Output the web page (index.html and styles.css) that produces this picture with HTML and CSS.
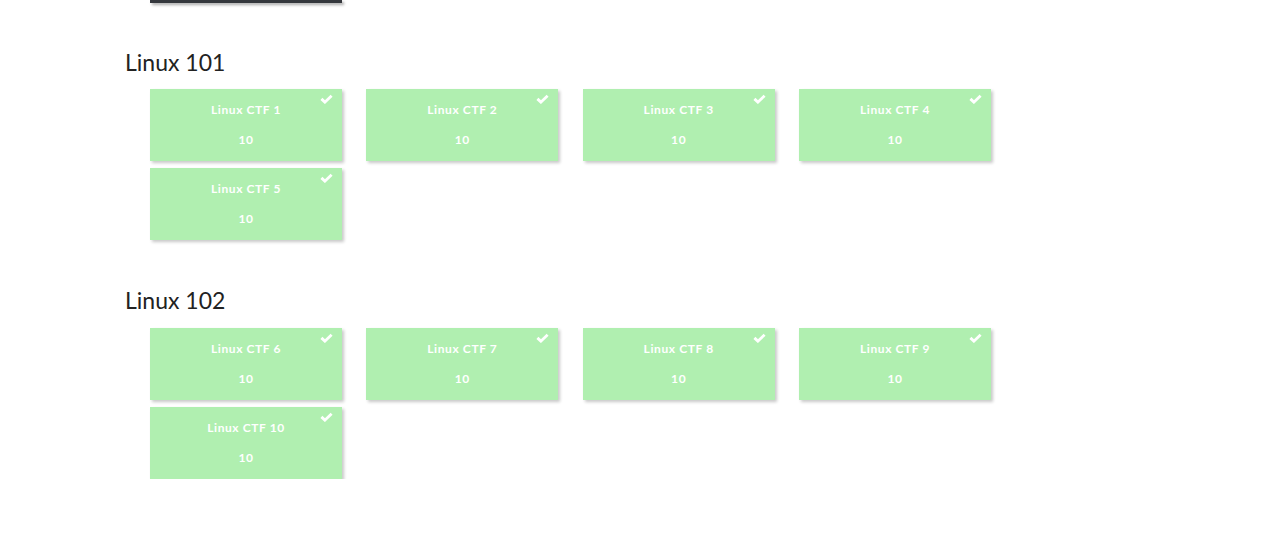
FILE: index.html
```html
<!DOCTYPE html>
<html>
<head>
<meta charset="utf-8">
<link rel="stylesheet" href="styles.css">
</head>
<body>
<div class="page">
  <div class="prev-card"></div>

  <section class="category">
    <h3 class="category-title">Linux 101</h3>
    <div class="grid">
      <div class="card"><svg class="check" viewBox="0 0 12 9"><polyline points="1.3,4.4 4.5,7.4 10.7,1.4"/></svg><p class="name">Linux CTF 1</p><p class="value">10</p></div>
      <div class="card"><svg class="check" viewBox="0 0 12 9"><polyline points="1.3,4.4 4.5,7.4 10.7,1.4"/></svg><p class="name">Linux CTF 2</p><p class="value">10</p></div>
      <div class="card"><svg class="check" viewBox="0 0 12 9"><polyline points="1.3,4.4 4.5,7.4 10.7,1.4"/></svg><p class="name">Linux CTF 3</p><p class="value">10</p></div>
      <div class="card"><svg class="check" viewBox="0 0 12 9"><polyline points="1.3,4.4 4.5,7.4 10.7,1.4"/></svg><p class="name">Linux CTF 4</p><p class="value">10</p></div>
      <div class="card"><svg class="check" viewBox="0 0 12 9"><polyline points="1.3,4.4 4.5,7.4 10.7,1.4"/></svg><p class="name">Linux CTF 5</p><p class="value">10</p></div>
    </div>
  </section>

  <section class="category">
    <h3 class="category-title">Linux 102</h3>
    <div class="grid">
      <div class="card"><svg class="check" viewBox="0 0 12 9"><polyline points="1.3,4.4 4.5,7.4 10.7,1.4"/></svg><p class="name">Linux CTF 6</p><p class="value">10</p></div>
      <div class="card"><svg class="check" viewBox="0 0 12 9"><polyline points="1.3,4.4 4.5,7.4 10.7,1.4"/></svg><p class="name">Linux CTF 7</p><p class="value">10</p></div>
      <div class="card"><svg class="check" viewBox="0 0 12 9"><polyline points="1.3,4.4 4.5,7.4 10.7,1.4"/></svg><p class="name">Linux CTF 8</p><p class="value">10</p></div>
      <div class="card"><svg class="check" viewBox="0 0 12 9"><polyline points="1.3,4.4 4.5,7.4 10.7,1.4"/></svg><p class="name">Linux CTF 9</p><p class="value">10</p></div>
      <div class="card"><svg class="check" viewBox="0 0 12 9"><polyline points="1.3,4.4 4.5,7.4 10.7,1.4"/></svg><p class="name">Linux CTF 10</p><p class="value">10</p></div>
    </div>
  </section>
</div>
</body>
</html>
```
FILE: styles.css
```css
html, body {
  margin: 0;
  padding: 0;
  background: #fff;
}
body {
  font-family: Lato, "Open Sans", "Liberation Sans", sans-serif;
  color: #222;
}
.page {
  padding-left: 125px;
}
.prev-card {
  margin-left: 25px;
  width: 192px;
  height: 3px;
  background: #35383d;
  box-shadow: 2px 2px 3px rgba(0, 0, 0, 0.35);
}
.category {
  padding-top: 46px;
}
.category + .category {
  padding-top: 47px;
}
.category + .category .grid {
  margin-top: 15px;
}
.category-title {
  margin: 0;
  font-size: 23px;
  font-weight: 400;
  line-height: 26px;
  color: #222;
}
.grid {
  margin-top: 14px;
  margin-left: 25px;
  display: grid;
  grid-template-columns: repeat(4, 192px);
  column-gap: 24.33px;
  row-gap: 7px;
}
.card {
  position: relative;
  height: 72px;
  background: #b0efb0;
  box-shadow: 2px 2px 3px rgba(0, 0, 0, 0.22);
  color: #fff;
  text-align: center;
  font-weight: 700;
  font-size: 12px;
  letter-spacing: 0.6px;
  display: flex;
  flex-direction: column;
  align-items: center;
  padding-top: 13px;
  box-sizing: border-box;
}
.card p {
  margin: 0;
  line-height: 15px;
}
.card .value {
  margin-top: 15px;
}
.check {
  position: absolute;
  top: 5px;
  right: 9px;
  width: 13px;
  height: 10px;
  fill: none;
  stroke: #fff;
  stroke-width: 2.6;
  stroke-linecap: butt;
  stroke-linejoin: miter;
}
```
